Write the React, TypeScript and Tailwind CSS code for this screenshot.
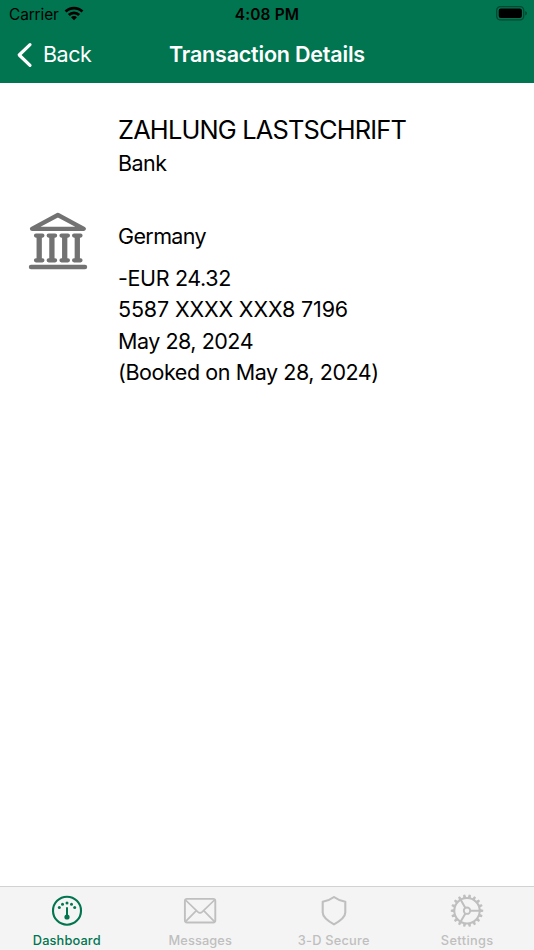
import React from "react";

function WifiIcon() {
  return (
    <svg className="h-[15px] w-5" viewBox="0 0 20 15">
      <path d="M0.6 4.6 A13.3 13.3 0 0 1 19.4 4.6 L17.5 6.6 A10.6 10.6 0 0 0 2.5 6.6 Z" />
      <path d="M3.800 8 A8.7 8.7 0 0 1 16.200 8 L14.2 10 A5.900 5.900 0 0 0 5.8 10 Z" />
      <path d="M7 11.300 A4.200 4.200 0 0 1 13 11.300 L10 14.300 Z" />
    </svg>
  );
}

function BatteryIcon() {
  return (
    <svg className="h-4 w-8" viewBox="0 0 32 16">
      <rect x="0.7" y="0.7" width="27" height="13.2" rx="3.6" fill="none" stroke="#000" strokeOpacity="0.4" strokeWidth="1.3" />
      <rect x="2.7" y="2.6" width="23.2" height="9.4" rx="2" />
      <path d="M29.3 5.1 C31.4 5.9 31.4 8.7 29.3 9.5 Z" fillOpacity="0.45" />
    </svg>
  );
}

function BankIcon() {
  return (
    <svg className="h-[58px] w-[60px]" viewBox="0 0 60 58" fill="none" stroke="#727272" strokeLinecap="round" strokeLinejoin="round">
      <path d="M4 16.8 L29.9 3 L55.8 16.8 Z" strokeWidth="4.3" />
      <path d="M3 55 H57" strokeWidth="4.4" />
      {[11.2, 23.9, 36.7, 49.3].map((x) => (
        <g key={x}>
          <path d={`M${x - 3.2} 23.600 h6.4 M${x - 3.2} 48.300 h6.4`} strokeWidth="4.200" />
          <path d={`M${x} 24 V48`} strokeWidth="5.300" strokeLinecap="butt" />
        </g>
      ))}
    </svg>
  );
}

function DashboardIcon() {
  return (
    <svg className="size-9" viewBox="0 0 36 36" fill="none" stroke="currentColor">
      <circle cx="18" cy="17.700" r="14" strokeWidth="2.100" />
      <path d="M18 15 V24" strokeWidth="2" strokeLinecap="round" />
      <g fill="currentColor" stroke="none">
        <circle cx="18" cy="24" r="2.6" />
        <circle cx="10.300" cy="14.400" r="1.5" />
        <circle cx="13.500" cy="11.200" r="1.5" />
        <circle cx="18" cy="9.900" r="1.5" />
        <circle cx="22.500" cy="11.200" r="1.5" />
        <circle cx="25.700" cy="14.400" r="1.5" />
      </g>
    </svg>
  );
}

function MessagesIcon() {
  return (
    <svg className="size-9" viewBox="0 0 36 36" fill="none" stroke="currentColor" strokeWidth="1.9">
      <rect x="2.9" y="5.9" width="30.4" height="23.6" rx="2.2" />
      <path d="M3.5 7 L15.8 18.900 Q18 20.900 20.2 18.900 L32.5 7 M3.5 28.700 L14.3 17.700 M32.5 28.700 L21.7 17.700" strokeWidth="1.700" />
    </svg>
  );
}

function ShieldIcon() {
  return (
    <svg className="size-9" viewBox="0 0 36 36" fill="none" stroke="currentColor" strokeWidth="2.100" strokeLinejoin="round">
      <path d="M18 4 C21 6.300 25 8 29.300 8.700 V19.500 C29.300 24.500 23.500 28.300 18 31.400 C12.500 28.300 6.700 24.500 6.700 19.500 V8.700 C11 8 15 6.300 18 4 Z" />
    </svg>
  );
}

function SettingsIcon() {
  return (
    <svg className="size-9" viewBox="0 0 36 36" fill="none" stroke="currentColor">
      <g transform="translate(0 -0.3)">
        <circle cx="18" cy="18" r="12.7" strokeWidth="2" />
        {Array.from({ length: 18 }, (_, i) => (
          <path key={i} d="M16.400 5 L17 1.800 H19 L19.600 5 Z" fill="currentColor" stroke="none" transform={`rotate(${i * 20 + 10} 18 18)`} />
        ))}
        <circle cx="18" cy="18" r="3.2" strokeWidth="1.900" />
        <path d="M21.200 18 H30.500 M16.400 15.200 L11.700 7.100 M16.400 20.800 L11.700 28.900" strokeWidth="2" />
      </g>
    </svg>
  );
}

const tabs = [
  { label: "Dashboard", Icon: DashboardIcon, color: "text-[#007550]", spacing: "tracking-[0.140px]" },
  { label: "Messages", Icon: MessagesIcon, color: "text-[#bfbfbf]", spacing: "tracking-[0.100px]" },
  { label: "3-D Secure", Icon: ShieldIcon, color: "text-[#bfbfbf]", spacing: "tracking-[0.220px]" },
  { label: "Settings", Icon: SettingsIcon, color: "text-[#bfbfbf]", spacing: "tracking-[0.360px]" },
];

export default function App() {
  return (
    <div className="flex h-[950px] w-[534px] flex-col overflow-hidden bg-white font-['Inter',sans-serif] text-black">
      <header className="h-[82.6px] shrink-0 bg-[#007550]">
        <div className="grid h-7 grid-cols-3 items-center pr-[6px] pl-[9px] text-[15.400px]">
          <div className="flex items-center gap-[5px]">
            <span className="pt-px tracking-[-0.100px]">Carrier</span>
            <WifiIcon />
          </div>
          <span className="pt-px pr-[3px] text-center font-semibold tracking-[0.200px] whitespace-nowrap">4:08 PM</span>
          <div className="flex justify-end">
            <BatteryIcon />
          </div>
        </div>
        <div className="grid h-[53px] grid-cols-[160px_1fr_160px] items-center text-[21.500px] text-white">
          <button className="flex items-center gap-[10px] pl-[16px]">
            <svg className="h-[26px] w-[17px]" viewBox="0 0 17 26" fill="none" stroke="currentColor" strokeWidth="3.200" strokeLinecap="round" strokeLinejoin="round">
              <path d="M14 2.600 L3.200 13 L14 23.400" />
            </svg>
            <span className="tracking-[-0.500px]">Back</span>
          </button>
          <h1 className="text-center font-semibold tracking-[-0.200px] whitespace-nowrap">Transaction Details</h1>
        </div>
      </header>

      <main className="flex flex-1 pt-[30.400px]">
        <div className="w-[118px] shrink-0 pt-[99px] pl-7">
          <BankIcon />
        </div>
        <div className="text-[21.500px] leading-[31.300px] whitespace-nowrap">
          <h2 className="text-[25.400px] leading-[33px] tracking-[-0.820px]">ZAHLUNG LASTSCHRIFT</h2>
          <p className="mt-[2px] tracking-[-0.530px]">Bank</p>
          <p className="mt-[42px] tracking-[-0.620px]">Germany</p>
          <p className="mt-[10.500px] tracking-[-0.360px]">-EUR 24.32</p>
          <p className="tracking-[-0.150px]">5587 XXXX XXX8 7196</p>
          <p className="tracking-[-0.480px]">May 28, 2024</p>
          <p className="tracking-[-0.430px]">(Booked on May 28, 2024)</p>
        </div>
      </main>

      <nav className="grid h-16 shrink-0 grid-cols-4 border-t border-[#d2d2d2] bg-[#f4f4f4]">
        {tabs.map(({ label, Icon, color, spacing }) => (
          <button key={label} className={`flex flex-col items-center pt-[6px] ${color}`}>
            <Icon />
            <span className={`mt-1 text-[12.800px] leading-4 font-medium whitespace-nowrap ${spacing}`}>{label}</span>
          </button>
        ))}
      </nav>
    </div>
  );
}
